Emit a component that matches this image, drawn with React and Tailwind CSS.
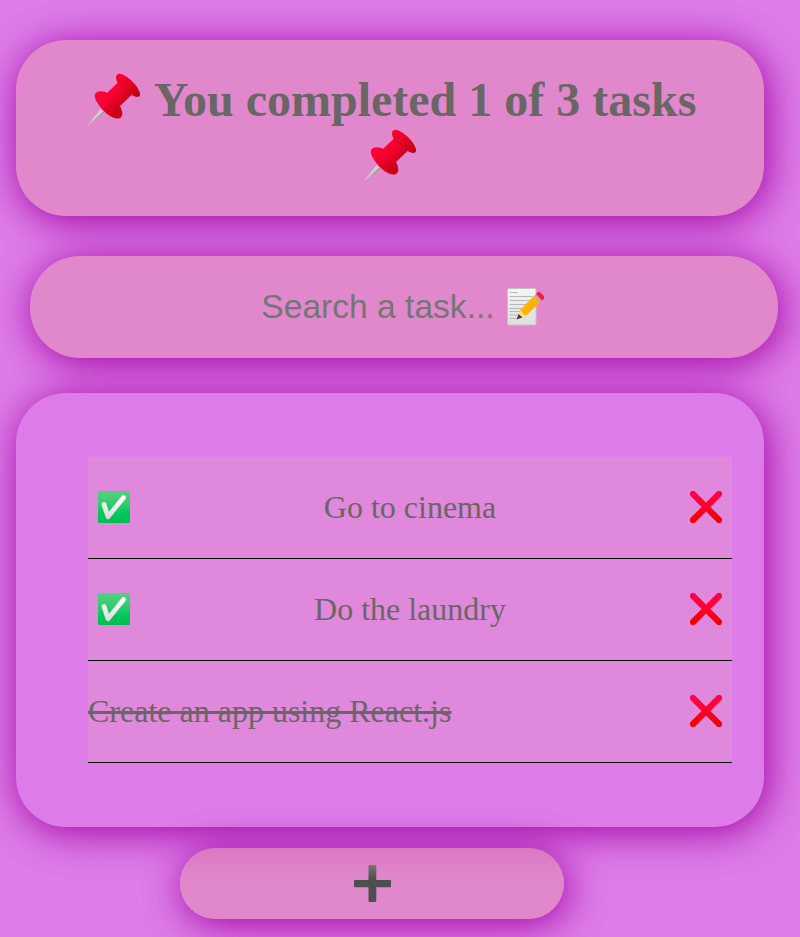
function Pin({ className = "" }) {
  return (
    <svg viewBox="0 0 60 60" className={`block h-[60px] w-[60px] shrink-0 ${className}`} aria-label="pushpin">
      <defs>
        <linearGradient id="pinHead" x1="0" y1="0" x2="1" y2="1">
          <stop offset="0" stopColor="#ff0038" />
          <stop offset=".5" stopColor="#e60024" />
          <stop offset="1" stopColor="#b80012" />
        </linearGradient>
        <linearGradient id="pinBody" x1=".2" y1=".2" x2=".75" y2=".8">
          <stop offset="0" stopColor="#ff0038" />
          <stop offset=".4" stopColor="#f4002d" />
          <stop offset="1" stopColor="#c90018" />
        </linearGradient>
      </defs>
      <path d="M3.500 56 L16.500 39 L20.500 42.500 Z" fill="#d2d0d0" />
      <path d="M3.500 56 L19.300 41.500 L20.500 42.500 Z" fill="#9b9294" />
      <path d="M23 23 L36 10.500 L48.500 24 L35.500 36.500 L30 38 Z" fill="url(#pinBody)" />
      <path d="M11 24.500 C12 21 17 20.500 21.500 22 C25.500 23.500 29.500 27.500 32.500 31 C35.500 34.500 39 40.500 38.300 44.500 C37.500 49 33 49.500 29 47.500 C24.500 45.500 19.500 41.500 16 36.500 C12.500 31.500 10 28 11 24.500 Z" fill="url(#pinBody)" />
      <path d="M32 7.500 C32 4 35 3 38.500 4.500 C42.500 6 48 10.500 51.500 15 C54 18.500 56.500 22 56 25 C55.500 27.500 52 27.500 48.500 25.500 C44 23 38.500 18.500 35 14.500 C33 12 32 9.500 32 7.500 Z" fill="url(#pinHead)" />
    </svg>
  );
}

function Memo() {
  return (
    <svg viewBox="0 0 38 38" className="h-[38px] w-[38px] shrink-0" aria-label="memo">
      <defs>
        <linearGradient id="paper" x1="0" y1="0" x2="0" y2="1">
          <stop offset="0" stopColor="#f5f5f5" />
          <stop offset="1" stopColor="#dedede" />
        </linearGradient>
      </defs>
      <rect x=".5" y=".5" width="28.5" height="36.5" rx="1.5" fill="url(#paper)" stroke="#c4c4c4" />
      <path d="M2.500 4.500 H11 M2.500 8.500 H26 M2.500 12.500 H26 M2.500 16.500 H24 M2.500 20.500 H20 M2.500 23.500 H16 M2.500 27 H13 M2.500 30.500 H9" stroke="#b8b8b8" />
      <path d="M9.500 31.500 L13 22 L18.500 28 Z" fill="#ffe082" />
      <path d="M9.500 31.500 L11.500 26 L15.500 29.500 Z" fill="#424242" />
      <path d="M13 22 L27 8 L33 14.500 L18.500 28 Z" fill="#ffb300" />
      <path d="M27 8 L29 6 L35 12.500 L33 14.500 Z" fill="#b0aaaa" />
      <path d="M29 6 L30.500 4.500 Q32 3.300 33.200 4.400 L36.800 8 Q37.800 9.500 36.800 11 L35 12.500 Z" fill="#ff1744" />
    </svg>
  );
}

function Check() {
  return (
    <svg viewBox="0 0 32 32" className="h-8 w-8" aria-label="complete">
      <defs>
        <linearGradient id="checkTile" x1="0" y1="0" x2="0" y2="1">
          <stop offset="0" stopColor="#52d080" />
          <stop offset=".35" stopColor="#3acc72" />
          <stop offset=".7" stopColor="#00c85c" />
          <stop offset="1" stopColor="#00bd50" />
        </linearGradient>
        <linearGradient id="tick" x1="0" y1="0" x2="0" y2="1">
          <stop offset="0" stopColor="#fff" />
          <stop offset="1" stopColor="#ddd" />
        </linearGradient>
      </defs>
      <rect width="32" height="32" rx="1.2" fill="url(#checkTile)" />
      <path d="M6 13.500 L10 25.800 L25.500 6.500" fill="none" stroke="url(#tick)" strokeWidth="4.800" strokeLinecap="round" strokeLinejoin="round" />
    </svg>
  );
}

function Cross() {
  return (
    <svg viewBox="0 0 32 32" className="h-8 w-8" aria-label="delete">
      <defs>
        <linearGradient id="cross" x1="0" y1="0" x2="0" y2="1">
          <stop offset="0" stopColor="#ff0048" />
          <stop offset=".5" stopColor="#ff0028" />
          <stop offset="1" stopColor="#f00000" />
        </linearGradient>
      </defs>
      <path d="M3 3 L29 29 M29 3 L3 29" stroke="url(#cross)" strokeWidth="6.2" strokeLinecap="round" />
    </svg>
  );
}

function Plus() {
  return (
    <svg viewBox="0 0 37 37" className="h-[37px] w-[37px]" aria-label="add">
      <defs>
        <linearGradient id="plus" x1="0" y1="0" x2="0" y2="1">
          <stop offset="0" stopColor="#757575" />
          <stop offset=".4" stopColor="#4e4e4e" />
          <stop offset="1" stopColor="#4e4e4e" />
        </linearGradient>
      </defs>
      <path d="M15.300 0 H21.500 Q22.300 0 22.300 .7 V15 H36.300 Q37 15 37 16 V21.300 Q37 22.300 36.300 22.300 H22.300 V36.300 Q22.300 37 21.500 37 H15.300 Q14.500 37 14.500 36.300 V22.300 H.7 Q0 22.300 0 21.300 V16 Q0 15 .7 15 H14.500 V.7 Q14.500 0 15.300 0 Z" fill="url(#plus)" />
    </svg>
  );
}

function Row({ text, done }) {
  return (
    <li className="flex h-[102px] items-center justify-between border-b border-black bg-[#df88dc] text-[32px]">
      {!done && (
        <button className="flex w-[52px] shrink-0 justify-center pb-0.5">
          <Check />
        </button>
      )}
      <span className={done ? "pb-0.5 line-through decoration-[3px]" : "pb-0.5"}>{text}</span>
      <button className="flex w-[52px] shrink-0 justify-center pb-0.5">
        <Cross />
      </button>
    </li>
  );
}

export default function App() {
  return (
    <main className="h-[937px] overflow-hidden bg-[#dd7ce9] px-4 pt-10 text-center font-['Liberation_Serif',serif] text-[#696665]">
      <h1 className="h-44 w-[748px] rounded-[50px] bg-[#e188cc] pt-8 text-[48px] leading-[56px] font-bold shadow-[3px_5px_40px_#a000a0]">
        <span className="flex h-14 items-center justify-center">
          <Pin />
          <span className="ml-[10px] h-14">You completed 1 of 3 tasks</span>
        </span>
        <Pin className="mx-auto -mt-0.5" />
      </h1>
      <label className="mt-10 ml-3.5 flex h-[102px] w-[748px] items-center justify-center rounded-[50px] bg-[#e188cc] pr-0.5 font-['Liberation_Sans',sans-serif] text-[33.6px] text-[#757575] shadow-[3px_5px_40px_#a000a0]">
        <span className="mr-3">Search a task...</span>
        <Memo />
      </label>
      <section className="mt-[35px] h-[434px] w-[748px] rounded-[50px] bg-[#dd7ce9] pt-16 pr-8 pl-[72px] shadow-[3px_5px_40px_#a000a0]">
        <ul>
          <Row text="Go to cinema" />
          <Row text="Do the laundry" />
          <Row text="Create an app using React.js" done />
        </ul>
      </section>
      <button className="mt-[21px] ml-[164px] flex h-[71px] w-96 items-center justify-center rounded-[50px] bg-linear-to-b from-[#da78c2] via-[#e086ca] via-40% to-[#e188cc] shadow-[3px_5px_40px_#a000a0]">
        <Plus />
      </button>
    </main>
  );
}
